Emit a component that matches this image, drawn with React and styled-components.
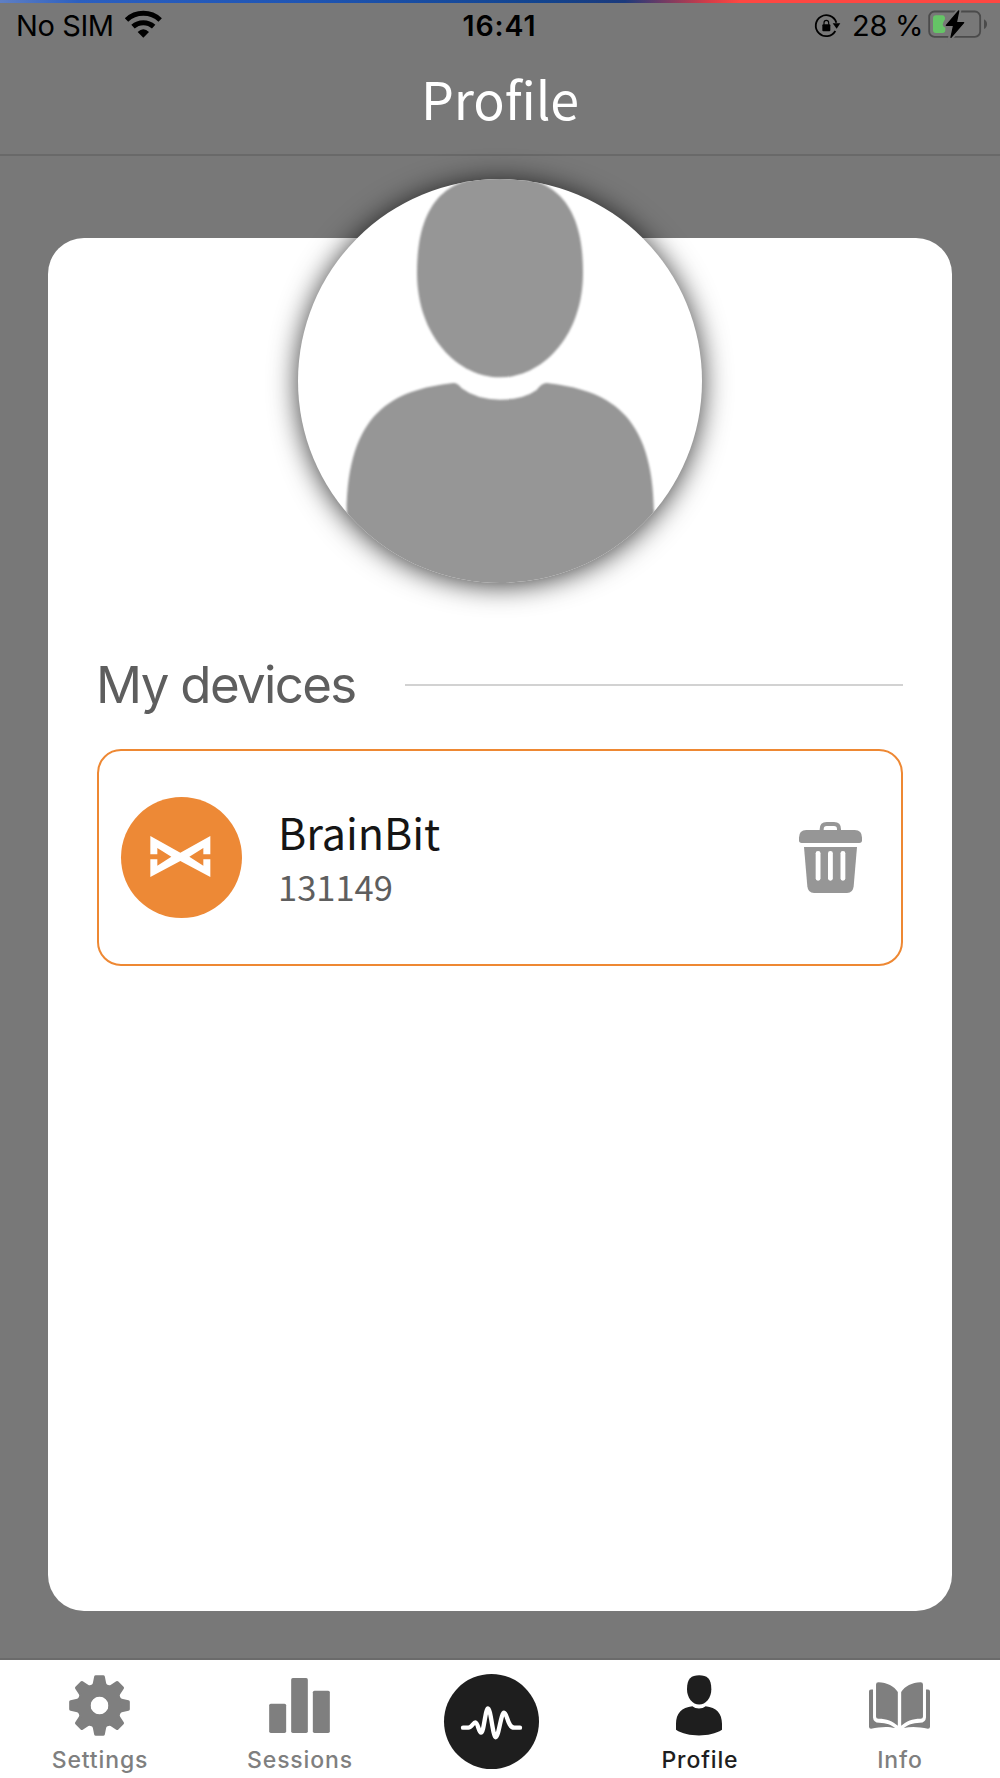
import styled, { createGlobalStyle } from "styled-components";

const GlobalStyle = createGlobalStyle`
  * {
    box-sizing: border-box;
  }

  body {
    margin: 0;
    background: #787878;
  }
`;

const system = `Inter, "Liberation Sans", sans-serif`;
const source = `"Noto Sans CJK JP", "Noto Sans", sans-serif`;

const Screen = styled.div`
  width: 1000px;
  height: 1778px;
  display: flex;
  flex-direction: column;
  overflow: hidden;
  background: #787878;
`;

const Stripe = styled.div`
  flex: 0 0 3px;
  background: linear-gradient(
    90deg,
    #5f7fc4 0,
    #2b5fc0 80px,
    #1f55b4 300px,
    #12448f 540px,
    #1c3a7c 625px,
    #d43c48 708px,
    #ff4742 740px
  );
`;

const StatusBar = styled.div`
  flex: 0 0 46px;
  display: grid;
  grid-template-columns: 1fr auto 1fr;
  padding: 5px 13px 0 16px;
  font-family: ${system};
  font-size: 29px;
  line-height: 35px;
  color: #000;
  white-space: pre;
`;

const StatusGroup = styled.div`
  display: flex;
  align-items: flex-start;
  justify-content: ${({ $end }) => ($end ? "flex-end" : "flex-start")};
`;

const Carrier = styled.span`
  width: 109px;
  letter-spacing: -0.4px;
`;

const Clock = styled.span`
  margin-left: -4px;
  font-size: 28.5px;
  font-weight: 600;
  letter-spacing: 0.9px;
`;

const Percent = styled.span`
  width: 76px;
  margin-left: 12px;
  letter-spacing: -0.3px;
`;

const Icon = styled.svg`
  display: block;
  flex: none;
  margin-top: ${({ $top = 0 }) => $top}px;
  overflow: visible;
`;

const Header = styled.header`
  flex: 0 0 107px;
  border-bottom: 2px solid #696969;
  text-align: center;
`;

const Title = styled.h1`
  margin: 0;
  padding-top: 10px;
  font-family: ${source};
  font-size: 52px;
  font-weight: 400;
  line-height: 77px;
  letter-spacing: -0.1px;
  color: #fff;
`;

const Body = styled.main`
  flex: 1;
  padding: 82px 48px 47px;
`;

const Card = styled.section`
  height: 1373px;
  padding: 0 49px;
  border-radius: 36px;
  background: #fff;
`;

const Avatar = styled.div`
  width: 404px;
  height: 404px;
  margin: 0 auto;
  transform: translateY(-59px);
  border-radius: 50%;
  overflow: hidden;
  background: #fff;
  box-shadow: 0 2px 28px rgba(0, 0, 0, 0.78);

  svg {
    filter: blur(1.2px);
  }
`;

const SectionTitle = styled.div`
  display: flex;
  align-items: center;
  height: 64px;
  margin-top: 11px;
`;

const Heading = styled.h2`
  width: 309px;
  margin: 0 0 0 -1px;
  font-family: ${system};
  font-size: 51px;
  font-weight: 400;
  line-height: 64px;
  letter-spacing: -1.65px;
  color: #5e5e5e;
  white-space: nowrap;
`;

const Rule = styled.div`
  flex: 1;
  height: 2px;
  background: #d2d2d2;
`;

const Device = styled.div`
  display: flex;
  align-items: center;
  height: 217px;
  margin-top: 32px;
  padding: 0 39px 0 22px;
  border: 2px solid #ee8833;
  border-radius: 24px;
`;

const DeviceLogo = styled.div`
  width: 121px;
  height: 121px;
  border-radius: 50%;
  background: #ed8936;
`;

const DeviceText = styled.div`
  flex: 1;
  margin: -5px 0 0 36px;
  font-family: ${source};
  white-space: nowrap;
`;

const DeviceName = styled.div`
  font-size: 43px;
  line-height: 61px;
  color: #151515;
`;

const Serial = styled.div`
  font-size: 34.5px;
  line-height: 48px;
  color: #5e5e5e;
`;

const TabBar = styled.nav`
  flex: 0 0 120px;
  display: flex;
  border-top: 2px solid #6b6b6b;
  background: #fff;
`;

const Tab = styled.div`
  flex: 1;
  display: flex;
  flex-direction: column;
  align-items: center;
  color: ${({ $active }) => ($active ? "#1e1e1e" : "#7f7f7f")};
`;

const TabIcon = styled.div`
  display: flex;
  align-items: center;
  justify-content: center;
  height: 62px;
  margin: 14px 2px 0 0;
`;

const TabLabel = styled.span`
  margin-top: 10px;
  font-family: ${system};
  font-size: 23px;
  font-weight: 500;
  line-height: 28px;
  letter-spacing: 0.85px;
`;

const StartButton = styled.div`
  width: 95px;
  height: 95px;
  margin: 14px 17px 0 0;
  border-radius: 50%;
  background: #1e1e1e;
`;

const WifiIcon = () => (
  <Icon $top={2} width="37" height="28" viewBox="375 29 111 84" fill="none" stroke="#000" strokeWidth="15">
    <path d="M379.500 59 A74 74 0 0 1 480.500 59" />
    <path d="M399 79 A46 46 0 0 1 461 79" />
    <path d="M430 112 L413 95 Q430 79 447 95 Z" fill="#000" stroke="none" />
  </Icon>
);

const RotationLockIcon = () => (
  <Icon $top={6} width="25" height="23" viewBox="344 42 75 69" fill="none" stroke="#000">
    <path d="M408 68 A31.500 31.500 0 1 0 405 93" strokeWidth="5.5" />
    <path d="M397 70 H420 L409 86 Z" fill="#000" stroke="none" />
    <path d="M371 74 V68 Q371 61 378 61 Q385 61 385 68 V74" strokeWidth="3.5" />
    <rect x="366" y="73" width="24" height="21" rx="3" fill="#000" stroke="none" />
  </Icon>
);

const BatteryIcon = () => (
  <Icon $top={2} width="59" height="29" viewBox="684 30 177 87">
    <rect x="687.500" y="34.500" width="153" height="76" rx="16" fill="none" stroke="#4b4b4b" strokeWidth="5.500" />
    <path d="M852 58 Q861 63 861 72.500 Q861 82 852 87 Z" fill="#4b4b4b" />
    <path
      d="M777 31 L737 77 H758 L751 115 L793 68 H771 Z"
      fill="#787878"
      stroke="#787878"
      strokeWidth="14"
    />
    <path d="M708 46 H727 Q736 47 735 58 Q728 69 728 74 Q729 80 736 83 V90 Q736 99 727 99 H708 Q699 99 699 90 V55 Q699 46 708 46 Z" fill="#65c466" />
    <path
      d="M776 33 L739 76 H761 L753 112 L791 68 H769 Z"
      fill="#000"
      stroke="#000"
      strokeWidth="4"
      strokeLinejoin="round"
    />
  </Icon>
);

const AvatarPicture = () => (
  <Icon width="404" height="404" viewBox="54 57 1212 1212" fill="#969696">
    <path d="M660 48 C805 48 909 110 909 338 C909 530 785 652 660 652 C535 652 411 530 411 338 C411 110 515 48 660 48 Z" />
    <path d="M520 669 Q533 669 545 685 Q590 719 660 719 Q730 719 770 690 Q785 669 800 669 C980 690 1120 755 1122 1060 V1300 H200 V1060 C202 755 340 690 520 669 Z" />
  </Icon>
);

const BrainBitIcon = () => (
  <Icon width="121" height="121" viewBox="32 36 363 363" fill="#fff">
    <path d="M120 153 L210 203 L300 153 V208 H279 V189 L237 215 L279 242 V223 H300 V276 L210 228 L120 276 V223 H141 V242 L183 215 L141 189 V208 H120 Z" />
  </Icon>
);

const TrashIcon = () => (
  <Icon width="63" height="71" viewBox="298 486 189 213" fill="#969696">
    <path d="M366 514 V508 Q366 492 381 492 H403 Q418 492 418 508 V514" fill="none" stroke="#969696" strokeWidth="12" />
    <path d="M320 510 H465 Q487 511 487 533 V541 Q487 549 479 549 H306 Q298 549 298 541 V533 Q298 511 320 510 Z" />
    <path d="M313 561 H472 L462 679 Q460 699 442 699 H343 Q325 699 323 679 Z" />
    <g fill="#fff">
      <rect x="348" y="573" width="14.500" height="89" rx="7" />
      <rect x="385" y="573" width="14.500" height="89" rx="7" />
      <rect x="422.500" y="573" width="14.500" height="89" rx="7" />
    </g>
  </Icon>
);

const GearIcon = () => (
  <Icon width="61" height="61" viewBox="-91.500 -91.500 183 183" fill="currentColor">
    {[0, 45, 90, 135, 180, 225, 270, 315].map((angle) => (
      <path
        key={angle}
        transform={`rotate(${angle})`}
        d="M0 -27 L-11 -26 L-27 -61 Q-21 -63 -20 -67 L-16 -87 Q-15 -91 -11 -91 H11 Q15 -91 16 -87 L20 -67 Q21 -63 27 -61 L11 -26 Z"
      />
    ))}
    <circle r="46" fill="none" stroke="currentColor" strokeWidth="38" />
  </Icon>
);

const BarsIcon = () => (
  <Icon $top={1} width="61" height="55" viewBox="809 262 182 165" fill="currentColor">
    <rect x="809" y="339" width="51" height="88" rx="5" />
    <rect x="875" y="262" width="50" height="165" rx="5" />
    <rect x="940" y="300" width="51" height="127" rx="5" />
  </Icon>
);

const PulseIcon = () => (
  <Icon width="95" height="95" viewBox="132 101 285 285" fill="none" stroke="#fff" strokeWidth="13">
    <path
      d="M189 262 H205 C215 262 220 246 226 246 C234 246 236 277 243 277 C252 277 256 204 264 204 C272 204 279 291 287 291 C296 291 303 217 312 217 C322 217 322 262 343 262 H360"
      strokeLinecap="round"
    />
  </Icon>
);

const PersonIcon = () => (
  <Icon width="46" height="61" viewBox="829 104 138 182" fill="currentColor">
    <path d="M898.500 104 C922 104 935 113 935 146 C935 172 918 192 898.500 192 C879 192 862 172 862 146 C862 113 875 104 898.500 104 Z" />
    <path d="M878 197 Q886 204 898 204 Q910 204 918 197 C950 201 967 218 967 250 V268 C948 280 924 285 898 285 C872 285 847 280 829 268 V250 C829 218 846 201 878 197 Z" />
  </Icon>
);

const BookIcon = () => (
  <Icon width="61" height="47" viewBox="358 275 182 139" fill="currentColor">
    {["", "translate(898 0) scale(-1 1)"].map((transform) => (
      <g key={transform} transform={transform}>
        <path d="M379 282 Q379 275 386 275 C412 276 433 287 444 304 V405 C428 391 412 384 386 384 Q379 384 379 378 Z" />
        <path d="M358 303 Q358 297 364 297 H370 V380 Q371 395 388 396 C410 397 425 402 436 412 C415 406 390 408 364 414 Q358 414 358 408 Z" />
      </g>
    ))}
  </Icon>
);

const NavTab = ({ icon, label, active }) => (
  <Tab $active={active}>
    <TabIcon>{icon}</TabIcon>
    <TabLabel>{label}</TabLabel>
  </Tab>
);

const App = () => {
  return (
    <Screen>
      <GlobalStyle />
      <Stripe />
      <StatusBar>
        <StatusGroup>
          <Carrier>No SIM</Carrier>
          <WifiIcon />
        </StatusGroup>
        <Clock>16:41</Clock>
        <StatusGroup $end>
          <RotationLockIcon />
          <Percent>28 %</Percent>
          <BatteryIcon />
        </StatusGroup>
      </StatusBar>

      <Header>
        <Title>Profile</Title>
      </Header>

      <Body>
        <Card>
          <Avatar>
            <AvatarPicture />
          </Avatar>
          <SectionTitle>
            <Heading>My devices</Heading>
            <Rule />
          </SectionTitle>
          <Device>
            <DeviceLogo>
              <BrainBitIcon />
            </DeviceLogo>
            <DeviceText>
              <DeviceName>BrainBit</DeviceName>
              <Serial>131149</Serial>
            </DeviceText>
            <TrashIcon />
          </Device>
        </Card>
      </Body>

      <TabBar>
        <NavTab icon={<GearIcon />} label="Settings" />
        <NavTab icon={<BarsIcon />} label="Sessions" />
        <Tab>
          <StartButton>
            <PulseIcon />
          </StartButton>
        </Tab>
        <NavTab icon={<PersonIcon />} label="Profile" active />
        <NavTab icon={<BookIcon />} label="Info" />
      </TabBar>
    </Screen>
  );
};

export default App;
